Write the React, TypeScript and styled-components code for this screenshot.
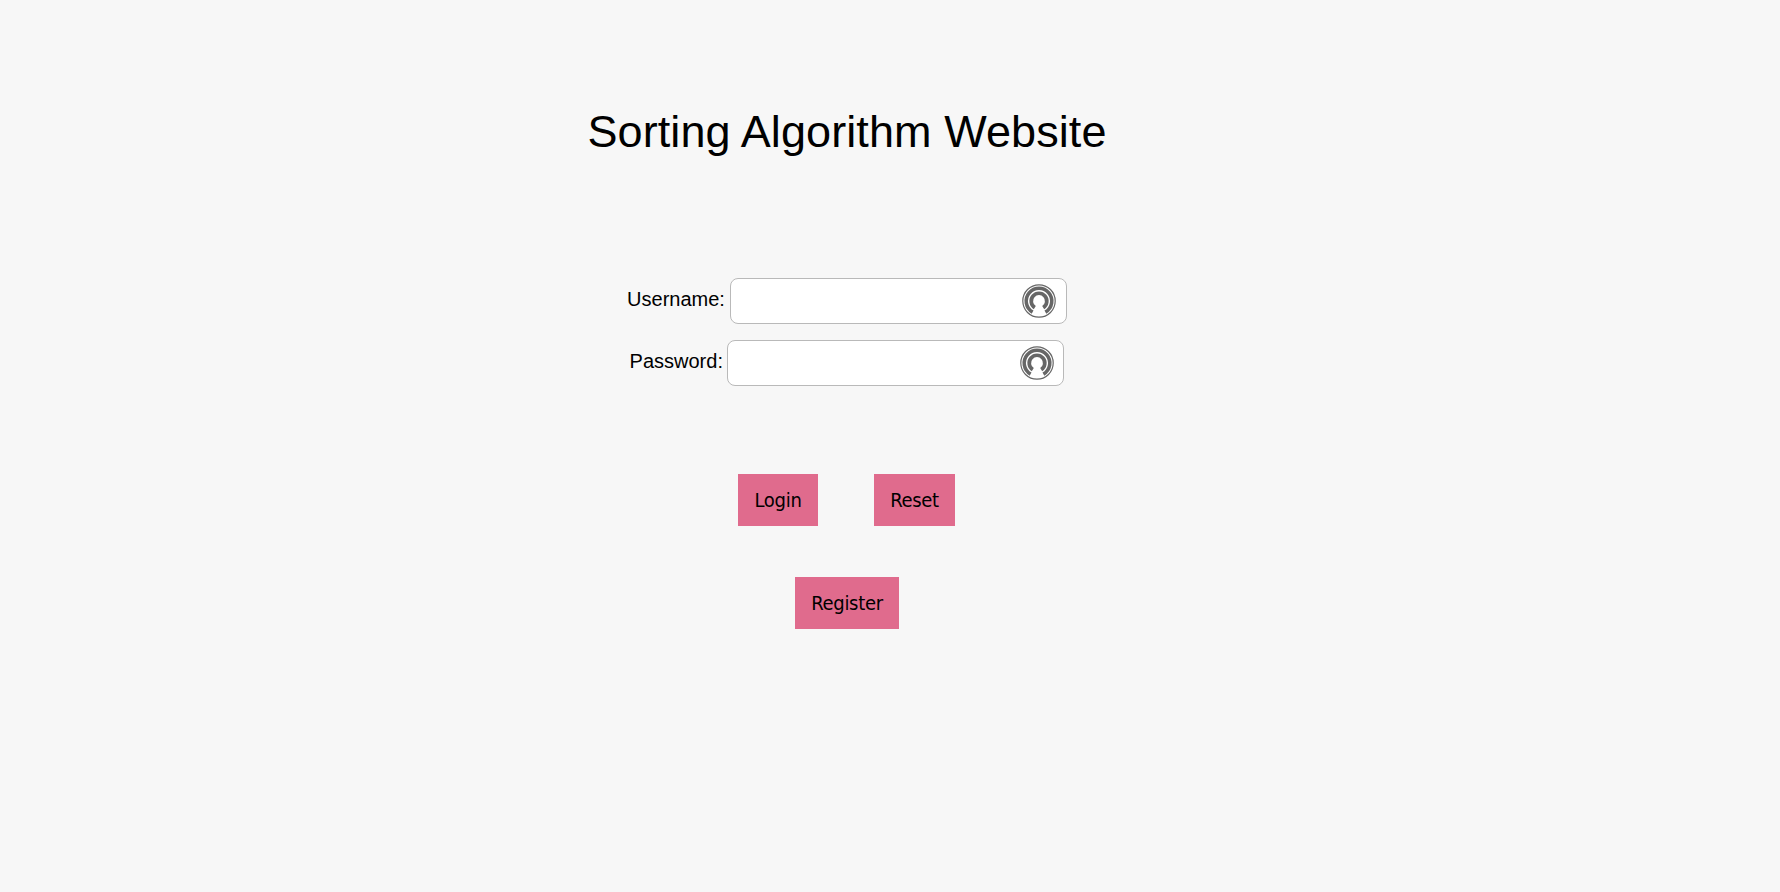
import React from 'react';
import styled, { createGlobalStyle } from 'styled-components';

const GlobalStyle = createGlobalStyle`
  body {
    margin: 0;
    min-height: 100vh;
    background: #f7f7f7;
    color: #000;
    font-family: Arial, 'Liberation Sans', sans-serif;
  }
`;

const Page = styled.main`
  display: flex;
  flex-direction: column;
  align-items: center;
  width: 1694px;
  padding-top: 106px;
`;

const Title = styled.h1`
  margin: 0;
  font-size: 45px;
  font-weight: 400;
  line-height: 52px;
  letter-spacing: 0.09px;
`;

const Form = styled.form`
  display: flex;
  flex-direction: column;
  align-items: center;
  margin-top: 120px;
`;

const Field = styled.div<{ $gap: number }>`
  display: flex;
  align-items: flex-start;
  gap: ${({ $gap }) => $gap}px;
  height: 46px;
  margin-bottom: 16px;
`;

const Label = styled.label`
  font-size: 20px;
  line-height: 24px;
  padding-top: 9px;
`;

const InputBox = styled.div<{ $inset: number }>`
  display: flex;
  align-items: center;
  box-sizing: border-box;
  width: 337px;
  height: 46px;
  padding-right: ${({ $inset }) => $inset}px;
  border: 1px solid #b9b9b9;
  border-radius: 8px;
  background: #fff;
`;

const Input = styled.input`
  flex: 1;
  min-width: 0;
  height: 42px;
  padding: 0 12px;
  border: 0;
  outline: 0;
  background: transparent;
  font: inherit;
  font-size: 20px;
`;

const Badge = styled.svg`
  display: block;
  width: 34px;
  height: 34px;
`;

const Actions = styled.div`
  display: flex;
  gap: 56px;
  margin-top: 72px;
  padding-right: 1px;
`;

const Button = styled.button<{ $width: number }>`
  width: ${({ $width }) => $width}px;
  height: 52px;
  padding: 0;
  border: 0;
  background: #e06b8d;
  color: #000;
  font-family: Tahoma, 'DejaVu Sans Condensed', 'DejaVu Sans', sans-serif;
  font-stretch: condensed;
  font-size: 20px;
  letter-spacing: -0.3px;
  white-space: nowrap;
`;

const RegisterRow = styled.div`
  margin-top: 51px;
`;

const KeyholeIcon = () => (
  <Badge viewBox="0 0 34 34" fill="none" stroke="#666" aria-hidden="true">
    <circle cx="17" cy="17" r="16.2" strokeWidth="1.2" />
    <path d="M10.6 28.1A12.8 12.8 0 1 1 23.4 28.1" strokeWidth="3.6" />
    <path d="M12.8 23.6A7.8 7.8 0 1 1 21.2 23.6" strokeWidth="3.7" />
  </Badge>
);

type TextFieldProps = { id: string; label: string; type: string; gap: number; inset: number };

const TextField = ({ id, label, type, gap, inset }: TextFieldProps) => (
  <Field $gap={gap}>
    <Label htmlFor={id}>{label}</Label>
    <InputBox $inset={inset}>
      <Input id={id} type={type} />
      <KeyholeIcon />
    </InputBox>
  </Field>
);

export default function App() {
  return (
    <>
      <GlobalStyle />
      <Page>
        <Title>Sorting Algorithm Website</Title>
        <Form onSubmit={(e) => e.preventDefault()}>
          <TextField id="username" label="Username:" type="text" gap={5} inset={10} />
          <TextField id="password" label="Password:" type="password" gap={4.5} inset={9} />
          <Actions>
            <Button type="submit" $width={80}>Login</Button>
            <Button type="reset" $width={81}>Reset</Button>
          </Actions>
          <RegisterRow>
            <Button type="button" $width={104}>Register</Button>
          </RegisterRow>
        </Form>
      </Page>
    </>
  );
}
